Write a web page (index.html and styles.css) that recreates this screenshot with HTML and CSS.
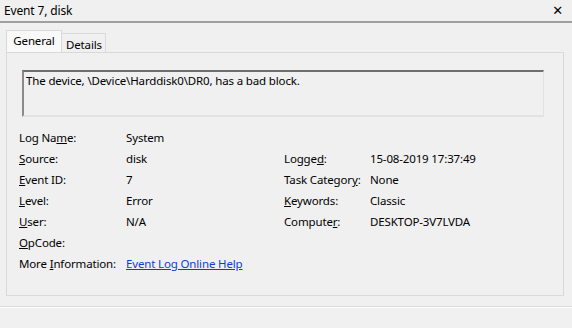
FILE: index.html
```html
<!DOCTYPE html>
<html lang="en">
<head>
    <meta charset="UTF-8">
    <title>Event 7, disk</title>
    <link rel="stylesheet" href="styles.css">
</head>
<body>

<div class="titlebar">
    <span class="title">Event 7, disk</span>
    <span class="close">&#x2715;</span>
</div>

<div class="dialog">
    <div class="tabs">
        <div class="tab active">General</div>
        <div class="tab">Details</div>
    </div>
    <div class="panel">
        <div class="message">The device, \Device\Harddisk0\DR0, has a bad block.</div>

        <div class="fields">
            <div class="label">Log Na<u>m</u>e:</div>
            <div class="value">System</div>
            <div></div>
            <div></div>

            <div class="label"><u>S</u>ource:</div>
            <div class="value">disk</div>
            <div class="label">Logge<u>d</u>:</div>
            <div class="value">15-08-2019 17:37:49</div>

            <div class="label"><u>E</u>vent ID:</div>
            <div class="value">7</div>
            <div class="label">Task Categor<u>y</u>:</div>
            <div class="value">None</div>

            <div class="label"><u>L</u>evel:</div>
            <div class="value">Error</div>
            <div class="label"><u>K</u>eywords:</div>
            <div class="value">Classic</div>

            <div class="label"><u>U</u>ser:</div>
            <div class="value">N/A</div>
            <div class="label">Compute<u>r</u>:</div>
            <div class="value">DESKTOP-3V7LVDA</div>

            <div class="label"><u>O</u>pCode:</div>
            <div class="value"></div>
            <div></div>
            <div></div>

            <div class="label">More <u>I</u>nformation:</div>
            <div class="value"><a href="#" class="help-link">Event Log Online Help</a></div>
            <div></div>
            <div></div>
        </div>
    </div>
</div>

<div class="separator"></div>

</body>
</html>
```

FILE: styles.css
```css
body {
    margin: 0;
    background-color: #f0f0f0;
    font-family: "Noto Sans", "Open Sans", sans-serif;
    font-size: 11.5px;
    letter-spacing: -0.15px;
    color: #000;
}
.titlebar {
    display: flex;
    justify-content: space-between;
    align-items: center;
    height: 21px;
    padding: 0 9px 0 4px;
    border-bottom: 2px solid #a0a0a0;
}
.title {
    font-size: 12px;
}
.close {
    font-size: 13px;
    font-weight: bold;
    font-family: "DejaVu Sans", sans-serif;
}
.dialog {
    padding: 7px 8px 0 6px;
}
.tabs {
    display: flex;
    align-items: flex-end;
}
.tab {
    height: 18px;
    padding: 0 4px;
    line-height: 21px;
    border: 1px solid #d9d9d9;
    border-bottom: none;
    border-left: none;
    width: 35px;
}
.tab.active {
    height: 21px;
    width: 46px;
    padding: 0 4px;
    line-height: 20px;
    border-left: 1px solid #d9d9d9;
    background-color: #f9f9f9;
    text-align: center;
}
.panel {
    height: 225px;
    border: 1px solid #d9d9d9;
    padding: 17px 0 0 0;
}
.message {
    margin-left: 15px;
    width: 515px;
    height: 42px;
    padding: 1px 2px 0 2px;
    border-top: 2px solid #6e6e6e;
    border-left: 2px solid #8a8a8a;
    border-right: 1px solid #e2e2e2;
    border-bottom: 2px solid #e2e2e2;
}
.fields {
    display: grid;
    grid-template-columns: 107px 158px 86px auto;
    grid-auto-rows: 21px;
    margin: 10px 0 0 12px;
    align-items: center;
}
.help-link {
    color: #0b3fd0;
}
.separator {
    margin-top: 10px;
    border-top: 1px solid #dadada;
    border-bottom: 1px solid #fff;
    height: 0;
    box-shadow: 0 2px 0 #e0e0e0;
}
```
